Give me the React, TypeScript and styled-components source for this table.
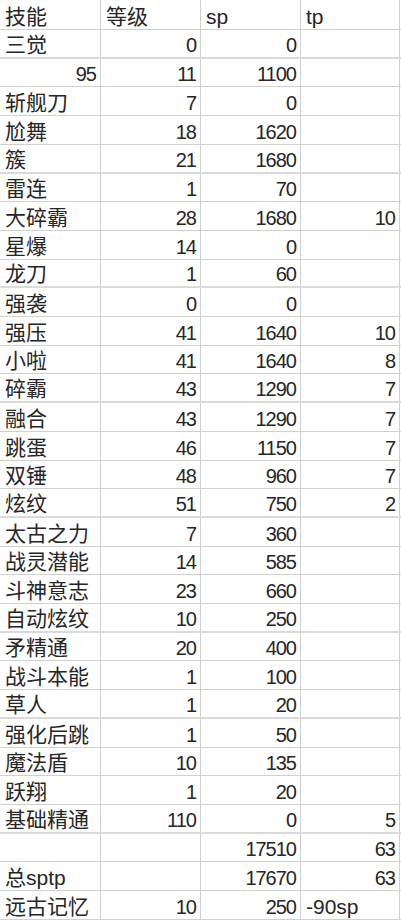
import styled, { createGlobalStyle } from "styled-components";

type Row = {
  name: string;
  level?: string;
  sp?: string;
  tp?: string;
  nameRight?: boolean;
  tpLeft?: boolean;
  thick?: boolean;
};

const rows: Row[] = [
  { name: "三觉", level: "0", sp: "0", thick: true },
  { name: "95", nameRight: true, level: "11", sp: "1100" },
  { name: "斩舰刀", level: "7", sp: "0" },
  { name: "尬舞", level: "18", sp: "1620" },
  { name: "簇", level: "21", sp: "1680", thick: true },
  { name: "雷连", level: "1", sp: "70" },
  { name: "大碎霸", level: "28", sp: "1680", tp: "10" },
  { name: "星爆", level: "14", sp: "0" },
  { name: "龙刀", level: "1", sp: "60", thick: true },
  { name: "强袭", level: "0", sp: "0" },
  { name: "强压", level: "41", sp: "1640", tp: "10" },
  { name: "小啦", level: "41", sp: "1640", tp: "8" },
  { name: "碎霸", level: "43", sp: "1290", tp: "7", thick: true },
  { name: "融合", level: "43", sp: "1290", tp: "7" },
  { name: "跳蛋", level: "46", sp: "1150", tp: "7" },
  { name: "双锤", level: "48", sp: "960", tp: "7" },
  { name: "炫纹", level: "51", sp: "750", tp: "2", thick: true },
  { name: "太古之力", level: "7", sp: "360" },
  { name: "战灵潜能", level: "14", sp: "585" },
  { name: "斗神意志", level: "23", sp: "660" },
  { name: "自动炫纹", level: "10", sp: "250", thick: true },
  { name: "矛精通", level: "20", sp: "400" },
  { name: "战斗本能", level: "1", sp: "100" },
  { name: "草人", level: "1", sp: "20", thick: true },
  { name: "强化后跳", level: "1", sp: "50" },
  { name: "魔法盾", level: "10", sp: "135" },
  { name: "跃翔", level: "1", sp: "20" },
  { name: "基础精通", level: "110", sp: "0", tp: "5", thick: true },
  { name: "", sp: "17510", tp: "63" },
  { name: "总sptp", sp: "17670", tp: "63" },
  { name: "远古记忆", level: "10", sp: "250", tp: "-90sp", tpLeft: true },
];

const GlobalStyle = createGlobalStyle`
  html, body {
    margin: 0;
    padding: 0;
    background: #ffffff;
  }
`;

const Sheet = styled.div`
  width: 401px;
  height: 922px;
  overflow: hidden;
  background: #ffffff;
  color: #262626;
  font-family: "Liberation Sans", "Noto Sans CJK SC", sans-serif;
`;

const Line = styled.div<{ $header?: boolean; $thick?: boolean }>`
  display: grid;
  grid-template-columns: 101px 100px 100px 99px;
  height: ${(p) => (p.$header ? "30px" : "28.71px")};
  box-sizing: border-box;
  border-bottom: ${(p) => (p.$thick ? "2px solid #dadada" : "1px solid #d0d0d0")};
`;

const Cell = styled.div<{ $align?: "left" | "right"; $num?: boolean }>`
  display: flex;
  align-items: flex-end;
  justify-content: ${(p) => (p.$align === "right" ? "flex-end" : "flex-start")};
  box-sizing: border-box;
  border-right: 1px solid #d0d0d0;
  padding: 0 ${(p) => (p.$align === "right" ? "4px" : "0")} 0
    ${(p) => (p.$align === "right" ? "0" : "5px")};
  font-size: ${(p) => (p.$num ? "20px" : "21px")};
  letter-spacing: ${(p) => (p.$num ? "-1px" : "0")};
  line-height: 24px;
  white-space: nowrap;
  overflow: hidden;
`;

export default function App() {
  return (
    <>
      <GlobalStyle />
      <Sheet>
        <Line $header>
          <Cell>技能</Cell>
          <Cell>等级</Cell>
          <Cell>sp</Cell>
          <Cell>tp</Cell>
        </Line>
        {rows.map((r, i) => (
          <Line key={i} $thick={r.thick}>
            <Cell $align={r.nameRight ? "right" : "left"} $num={r.nameRight}>
              {r.name}
            </Cell>
            <Cell $align="right" $num>
              {r.level}
            </Cell>
            <Cell $align="right" $num>
              {r.sp}
            </Cell>
            <Cell $align={r.tpLeft ? "left" : "right"} $num={!r.tpLeft}>
              {r.tp}
            </Cell>
          </Line>
        ))}
      </Sheet>
    </>
  );
}
